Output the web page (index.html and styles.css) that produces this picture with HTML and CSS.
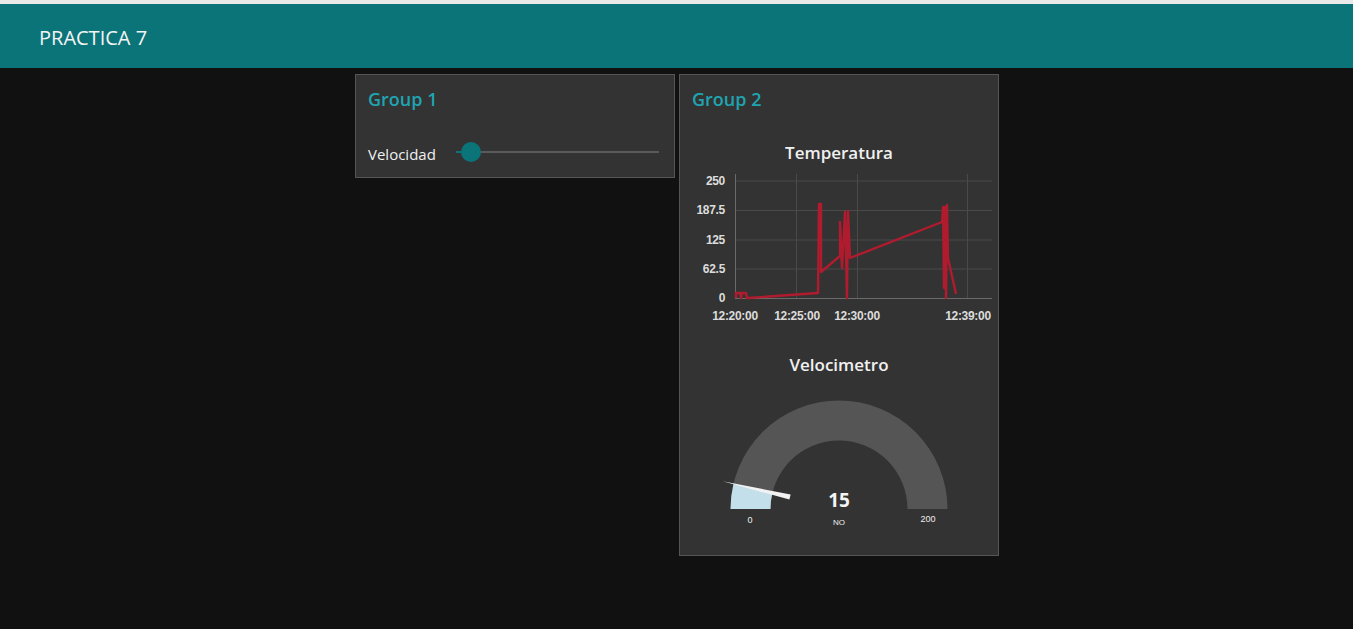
FILE: index.html
```html
<!DOCTYPE html>
<html>
<head>
<meta charset="utf-8">
<link rel="stylesheet" href="styles.css">
</head>
<body>
<header class="topbar"><span class="topbar-title">PRACTICA 7</span></header>
<main class="content">
  <section class="group group-1">
    <div class="group-title">Group 1</div>
    <div class="slider-row">
      <span class="slider-label">Velocidad</span>
      <div class="slider">
        <div class="slider-fill"></div>
        <div class="slider-thumb"></div>
      </div>
    </div>
  </section>
  <section class="group group-2">
    <div class="group-title">Group 2</div>
    <div class="widget-title chart-title">Temperatura</div>
    <svg class="chart" width="318" height="160" viewBox="0 0 318 160">
      <g stroke="#4a4a4a" stroke-width="1">
        <line x1="55" y1="11" x2="312" y2="11"/>
        <line x1="55" y1="40.5" x2="312" y2="40.5"/>
        <line x1="55" y1="70" x2="312" y2="70"/>
        <line x1="55" y1="99" x2="312" y2="99"/>
        <line x1="116.5" y1="4" x2="116.5" y2="128"/>
        <line x1="177.5" y1="4" x2="177.5" y2="128"/>
        <line x1="287.5" y1="4" x2="287.5" y2="128"/>
      </g>
      <g stroke="#6a6a6a" stroke-width="1">
        <line x1="55.5" y1="4" x2="55.5" y2="128"/>
        <line x1="55" y1="128.5" x2="312" y2="128.5"/>
      </g>
      <g class="axis-text" text-anchor="end">
        <text x="45" y="15">250</text>
        <text x="45" y="44">187.5</text>
        <text x="45" y="74">125</text>
        <text x="45" y="103">62.5</text>
        <text x="45" y="132">0</text>
      </g>
      <g class="axis-text" text-anchor="middle">
        <text x="55" y="150">12:20:00</text>
        <text x="117" y="150">12:25:00</text>
        <text x="177" y="150">12:30:00</text>
        <text x="288" y="150">12:39:00</text>
      </g>
      <polyline fill="none" stroke="#b01b2e" stroke-width="2.4" stroke-linejoin="round"
        points="56,128 56,123 60,123 61,128 62,123 66,123 67,128 68,128 138,123 139,34 141,34 141,102 160,86 160,52 162,98 165,42 167,128 168,41 170,88 262,52 263,37 264,118 265,37 266,128 267,35 268,88 276,124"/>
    </svg>
    <div class="widget-title gauge-title">Velocimetro</div>
    <svg class="gauge" width="318" height="150" viewBox="0 0 318 150">
      <path d="M50.5,129 A108.5,108.5 0 0 1 267.5,129 L227.5,129 A68.5,68.5 0 0 0 90.5,129 Z" fill="#555555"/>
      <path d="M50.5,129 A108.5,108.5 0 0 1 53.5,103.7 L92.4,113 A68.5,68.5 0 0 0 90.5,129 Z" fill="#c3dfea"/>
      <polygon points="42.7,101.3 110.6,114.4 109.4,119.6" fill="#f2f2f2"/>
      <text class="gauge-value" x="159" y="127" text-anchor="middle">15</text>
      <text class="gauge-units" x="159" y="145" text-anchor="middle">NO</text>
      <text class="gauge-limit" x="70" y="143" text-anchor="middle">0</text>
      <text class="gauge-limit" x="248" y="142" text-anchor="middle">200</text>
    </svg>
  </section>
</main>
</body>
</html>
```
FILE: styles.css
```css
html, body {
  margin: 0;
  padding: 0;
}
body {
  background: #111111;
  font-family: "Open Sans", "Noto Sans", sans-serif;
  color: #eeeeee;
  width: 1353px;
  height: 629px;
  overflow: hidden;
  border-top: 4px solid #e9e9e9;
  box-sizing: border-box;
}
.topbar {
  background: #0b7479;
  height: 64px;
  display: flex;
  align-items: center;
  padding-left: 39px;
}
.topbar-title {
  font-size: 20px;
  color: #f4f4f4;
  line-height: 24px;
  margin-top: 3px;
}
.content {
  display: flex;
  justify-content: center;
  align-items: flex-start;
  gap: 4px;
  padding-top: 6px;
  padding-left: 1px;
}
.group {
  width: 320px;
  box-sizing: border-box;
  background: #333333;
  border: 1px solid #555555;
}
.group-title {
  color: #1ea5b1;
  font-size: 18px;
  font-weight: 600;
  line-height: 24px;
  padding: 12px 12px 19px;
}
.slider-row {
  height: 47px;
  display: flex;
  align-items: center;
  padding-left: 12px;
  padding-right: 15px;
}
.slider-label {
  width: 88px;
  font-size: 15px;
  color: #f0f0f0;
  flex: none;
}
.slider {
  flex: 1;
  height: 2px;
  background: #5a5a5a;
  position: relative;
  margin-top: -3px;
}
.slider-fill {
  width: 14px;
  height: 2px;
  background: #0b7479;
}
.slider-thumb {
  position: absolute;
  left: 5px;
  top: -9px;
  width: 20px;
  height: 20px;
  border-radius: 50%;
  background: #0b7479;
}
.group-2 {
  padding-bottom: 25px;
}
.group-2 .group-title {
  padding-bottom: 19px;
}
.widget-title {
  text-align: center;
  font-size: 17px;
  font-weight: 600;
  line-height: 30px;
  color: #f0f0f0;
}
.chart-title {
  margin-top: 8px;
}
.chart {
  display: block;
  margin-top: 2px;
}
.gauge-title {
  margin-top: 20px;
}
.gauge {
  display: block;
}
.axis-text text {
  font-family: "Liberation Sans", Arial, sans-serif;
  font-size: 12px;
  font-weight: 700;
  fill: #dcdcdc;
  letter-spacing: -0.3px;
}
.gauge-value {
  font-family: "Open Sans", sans-serif;
  font-size: 19px;
  font-weight: 700;
  fill: #f4f4f4;
}
.gauge-units {
  font-family: "Liberation Sans", Arial, sans-serif;
  font-size: 8px;
  fill: #eeeeee;
}
.gauge-limit {
  font-family: "Liberation Sans", Arial, sans-serif;
  font-size: 9px;
  fill: #eeeeee;
}
```
